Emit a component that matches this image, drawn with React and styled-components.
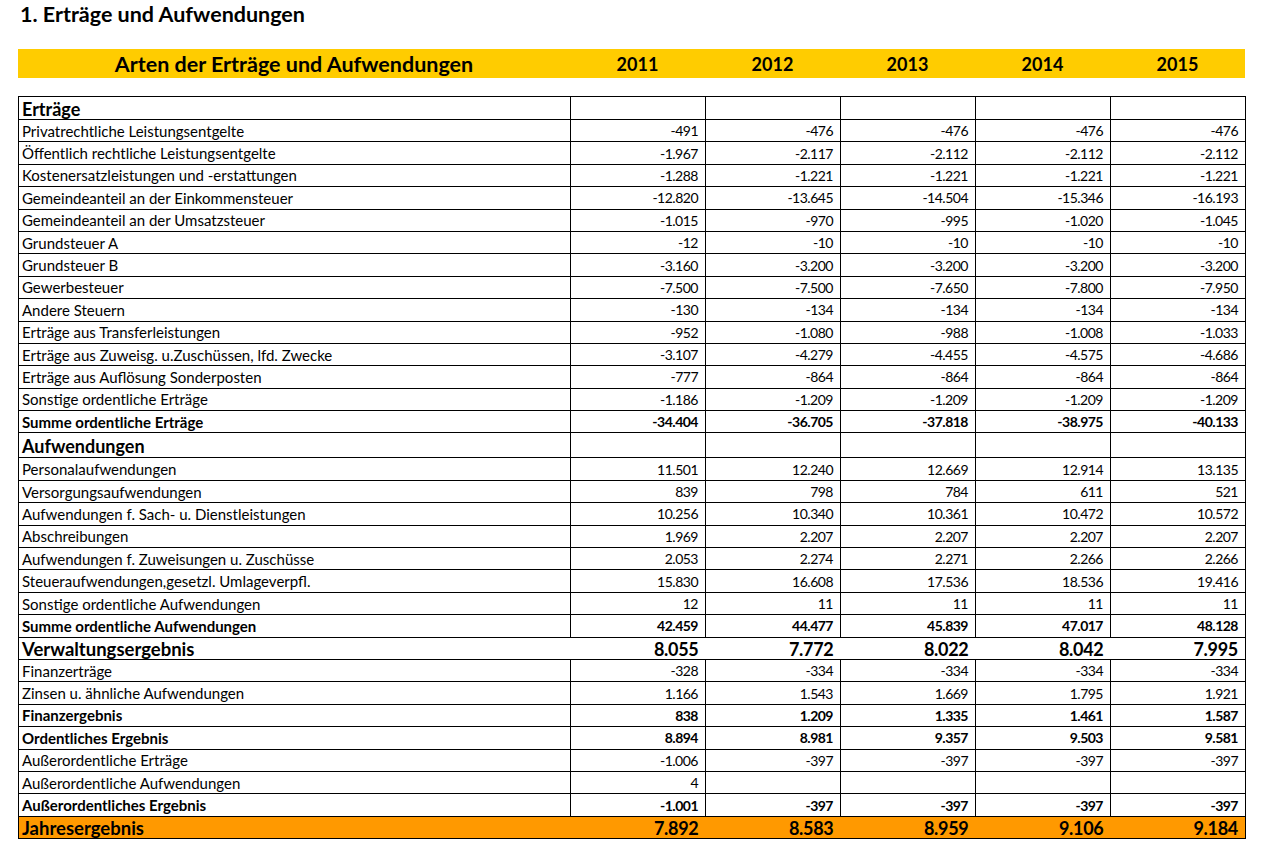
import styled, { createGlobalStyle } from 'styled-components';

const GlobalStyle = createGlobalStyle`
  body {
    margin: 0;
    background: #fff;
    font-family: Lato, "Open Sans", sans-serif;
    color: #000;
  }
`

const Page = styled.div`
  width: 1227px;
  padding: 2px 17px 0 18px;
`

const Title = styled.h1`
  margin: 0 0 22px 2px;
  font-size: 21.5px;
  line-height: 25px;
  font-weight: 700;
`

const HeadBar = styled.div`
  display: grid;
  grid-template-columns: 552px repeat(5, 135px);
  height: 29px;
  align-items: center;
  background: #ffcc00;
  margin-bottom: 18px;
`

const HeadCell = styled.div`
  text-align: center;
  font-weight: 700;
  font-size: ${(p) => (p.$wide ? '21.5px' : '18px')};
  padding-top: ${(p) => (p.$wide ? '0' : '1px')};
`

const Table = styled.table`
  width: 1227px;
  table-layout: fixed;
  border-collapse: collapse;
`

const Row = styled.tr`
  height: ${(p) => p.$h || 22.4}px;
  background: ${(p) => (p.$total ? '#ff9900' : 'transparent')};

  td {
    border: 1px solid #000;
    padding: 0;
    white-space: nowrap;
    overflow: hidden;
    vertical-align: middle;
  }

  ${(p) =>
    p.$open &&
    `
    td { border-left: none; border-right: none; }
    td:first-child { border-left: 1px solid #000; }
    td:last-child { border-right: 1px solid #000; }
  `}
`

const Label = styled.td`
  padding-left: 3px !important;
  padding-top: 1px !important;
  font-size: ${(p) => p.$size}px;
  font-weight: ${(p) => (p.$bold ? 700 : 400)};
  line-height: 1;
`

const Num = styled.td`
  text-align: right;
  padding-right: 7px !important;
  padding-top: 1px !important;
  font-size: ${(p) => p.$size}px;
  font-weight: ${(p) => (p.$bold ? 700 : 400)};
  letter-spacing: ${(p) => (p.$size > 15 ? '-0.3px' : '-0.5px')};
  line-height: 1;
`

const years = ['2011', '2012', '2013', '2014', '2015']

// kind: head | item | sum | big | total
const rows = [
  ['head', 'Erträge', [], 23],
  ['item', 'Privatrechtliche Leistungsentgelte', ['-491', '-476', '-476', '-476', '-476']],
  ['item', 'Öffentlich rechtliche Leistungsentgelte', ['-1.967', '-2.117', '-2.112', '-2.112', '-2.112']],
  ['item', 'Kostenersatzleistungen und -erstattungen', ['-1.288', '-1.221', '-1.221', '-1.221', '-1.221']],
  ['item', 'Gemeindeanteil an der Einkommensteuer', ['-12.820', '-13.645', '-14.504', '-15.346', '-16.193']],
  ['item', 'Gemeindeanteil an der Umsatzsteuer', ['-1.015', '-970', '-995', '-1.020', '-1.045']],
  ['item', 'Grundsteuer A', ['-12', '-10', '-10', '-10', '-10']],
  ['item', 'Grundsteuer B', ['-3.160', '-3.200', '-3.200', '-3.200', '-3.200']],
  ['item', 'Gewerbesteuer', ['-7.500', '-7.500', '-7.650', '-7.800', '-7.950']],
  ['item', 'Andere Steuern', ['-130', '-134', '-134', '-134', '-134']],
  ['item', 'Erträge aus Transferleistungen', ['-952', '-1.080', '-988', '-1.008', '-1.033']],
  ['item', 'Erträge aus Zuweisg. u.Zuschüssen, lfd. Zwecke', ['-3.107', '-4.279', '-4.455', '-4.575', '-4.686']],
  ['item', 'Erträge aus Auflösung Sonderposten', ['-777', '-864', '-864', '-864', '-864']],
  ['item', 'Sonstige ordentliche Erträge', ['-1.186', '-1.209', '-1.209', '-1.209', '-1.209']],
  ['sum', 'Summe ordentliche Erträge', ['-34.404', '-36.705', '-37.818', '-38.975', '-40.133']],
  ['head', 'Aufwendungen', [], 25],
  ['item', 'Personalaufwendungen', ['11.501', '12.240', '12.669', '12.914', '13.135']],
  ['item', 'Versorgungsaufwendungen', ['839', '798', '784', '611', '521']],
  ['item', 'Aufwendungen f. Sach- u. Dienstleistungen', ['10.256', '10.340', '10.361', '10.472', '10.572']],
  ['item', 'Abschreibungen', ['1.969', '2.207', '2.207', '2.207', '2.207']],
  ['item', 'Aufwendungen f. Zuweisungen u. Zuschüsse', ['2.053', '2.274', '2.271', '2.266', '2.266']],
  ['item', 'Steueraufwendungen,gesetzl. Umlageverpfl.', ['15.830', '16.608', '17.536', '18.536', '19.416']],
  ['item', 'Sonstige ordentliche Aufwendungen', ['12', '11', '11', '11', '11']],
  ['sum', 'Summe ordentliche Aufwendungen', ['42.459', '44.477', '45.839', '47.017', '48.128']],
  ['big', 'Verwaltungsergebnis', ['8.055', '7.772', '8.022', '8.042', '7.995']],
  ['item', 'Finanzerträge', ['-328', '-334', '-334', '-334', '-334']],
  ['item', 'Zinsen u. ähnliche Aufwendungen', ['1.166', '1.543', '1.669', '1.795', '1.921']],
  ['sum', 'Finanzergebnis', ['838', '1.209', '1.335', '1.461', '1.587']],
  ['sum', 'Ordentliches Ergebnis', ['8.894', '8.981', '9.357', '9.503', '9.581']],
  ['item', 'Außerordentliche Erträge', ['-1.006', '-397', '-397', '-397', '-397']],
  ['item', 'Außerordentliche Aufwendungen', ['4', '', '', '', '']],
  ['sum', 'Außerordentliches Ergebnis', ['-1.001', '-397', '-397', '-397', '-397']],
  ['total', 'Jahresergebnis', ['7.892', '8.583', '8.959', '9.106', '9.184']],
]

const sizes = {
  head: { label: 18, num: 14, bold: true },
  item: { label: 15, num: 14, bold: false },
  sum: { label: 15, num: 14, bold: true },
  big: { label: 18.5, num: 18, bold: true },
  total: { label: 18.5, num: 18, bold: true },
}

const App = () => {
  return (
    <Page>
      <GlobalStyle />
      <Title>1. Erträge und Aufwendungen</Title>

      <HeadBar>
        <HeadCell $wide>Arten der Erträge und Aufwendungen</HeadCell>
        {years.map((y) => (
          <HeadCell key={y}>{y}</HeadCell>
        ))}
      </HeadBar>

      <Table>
        <colgroup>
          <col style={{ width: 552 }} />
          {years.map((y) => (
            <col key={y} style={{ width: 135 }} />
          ))}
        </colgroup>
        <tbody>
          {rows.map(([kind, label, vals, h]) => {
            const s = sizes[kind]
            const cells = kind === 'head' ? ['', '', '', '', ''] : vals
            return (
              <Row key={label} $h={h} $open={kind === 'big' || kind === 'total'} $total={kind === 'total'}>
                <Label $size={s.label} $bold={s.bold}>{label}</Label>
                {cells.map((v, i) => (
                  <Num key={i} $size={s.num} $bold={s.bold && kind !== 'head'}>{v}</Num>
                ))}
              </Row>
            )
          })}
        </tbody>
      </Table>
    </Page>
  );
};

export default App;
